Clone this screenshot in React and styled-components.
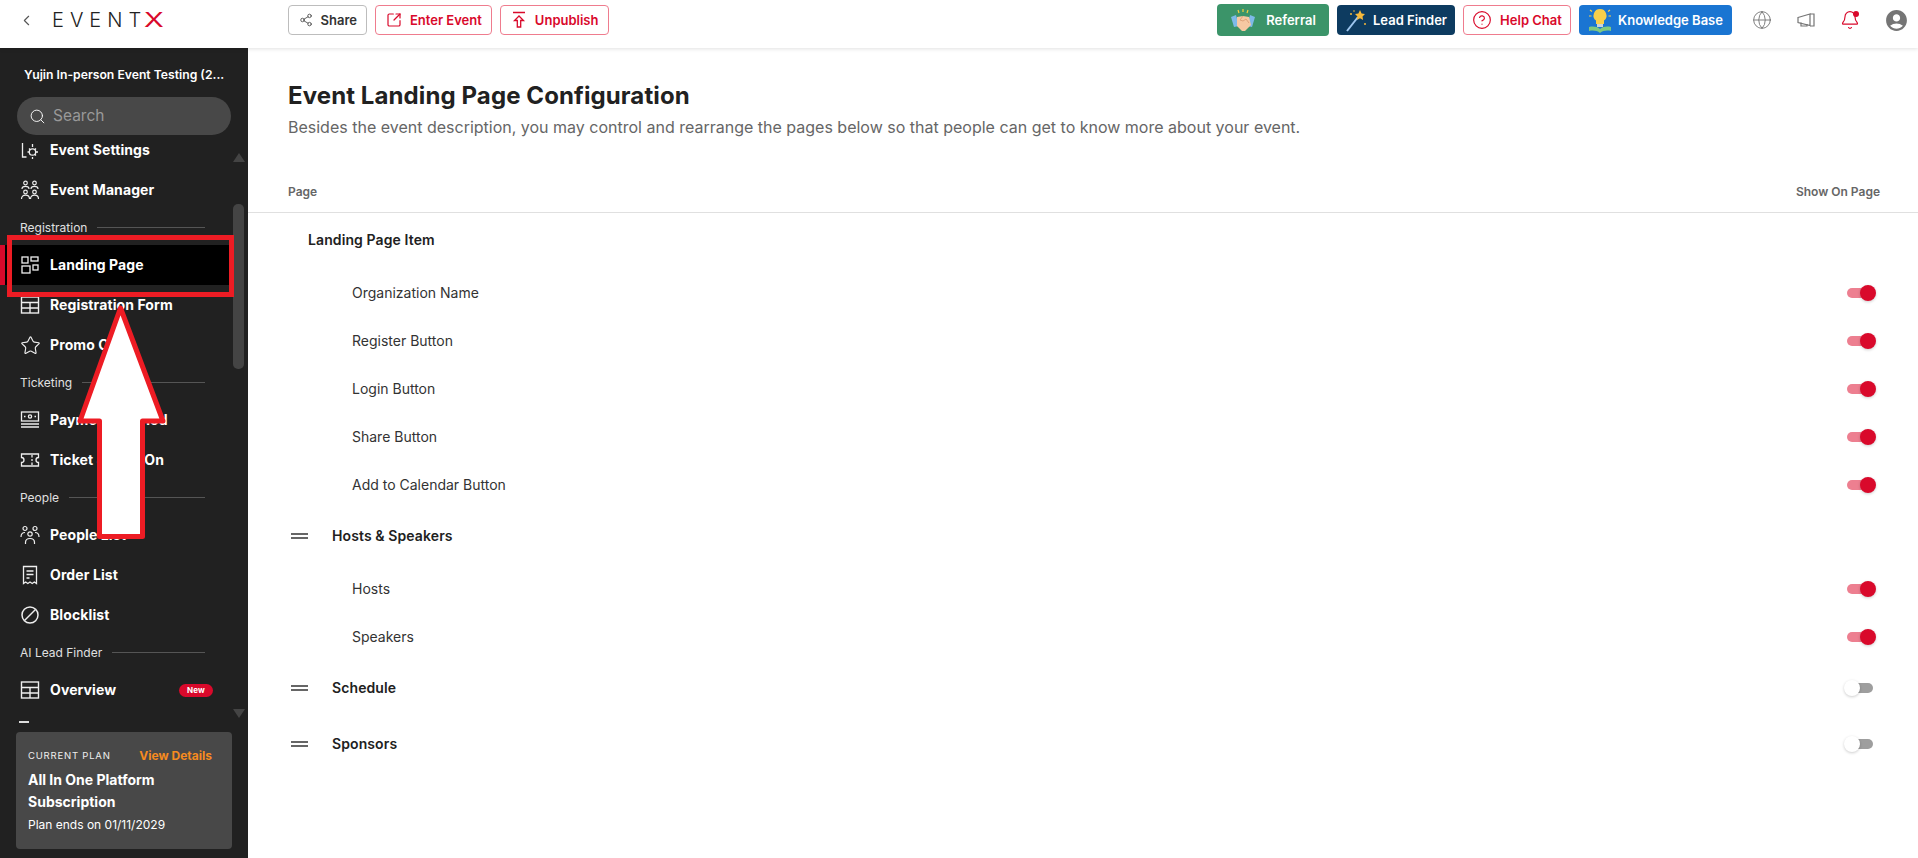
import { Bell, ChevronLeft, CircleHelp, Globe, Search, Share2, SquareArrowOutUpRight, Star } from 'lucide-react'
import { MdAccountCircle } from 'react-icons/md'
import styled, { createGlobalStyle } from 'styled-components'

const FONT = `Inter, "Noto Sans", "Liberation Sans", sans-serif`

const GlobalStyle = createGlobalStyle`
	* { box-sizing: border-box; }
	html, body { margin: 0; height: 100%; overflow: hidden; background: #fff; }
	body { font-family: ${FONT}; color: #212121; }
`

const SettingsIcon = () => (
	<svg width="20" height="20" viewBox="0 0 20 20" fill="none" stroke="currentColor" strokeWidth="1.3">
		<path d="M2.5 3v14h4" />
		<circle cx="12.5" cy="12" r="3.2" />
		<path d="M12.5 4v3M12.5 17v2M7.5 12h2M15.7 12h2.3M9 8.5l1.2 1.2M16 15.5l-1.2-1.2M16 8.5l-1.2 1.2" />
	</svg>
)

const ManagerIcon = () => (
	<svg width="20" height="20" viewBox="0 0 20 20" fill="none" stroke="currentColor" strokeWidth="1.2">
		<circle cx="5.5" cy="3" r="1.8" />
		<circle cx="14.5" cy="3" r="1.8" />
		<path d="M2 9c0-2 1.5-2.6 3.5-2.6S9 7 9 9M11 9c0-2 1.5-2.6 3.5-2.6S18 7 18 9" />
		<circle cx="5.5" cy="12" r="1.8" />
		<circle cx="14.5" cy="12" r="1.8" />
		<path d="M1.5 19c0-2.600 1.500-3.800 4-3.800s4 1.200 4 3.800M10.500 19c0-2.600 1.500-3.800 4-3.800s4 1.200 4 3.800" />
	</svg>
)

const LandingIcon = () => (
	<svg width="20" height="20" viewBox="0 0 20 20" fill="none" stroke="currentColor" strokeWidth="1.3">
		<rect x="2" y="2" width="6" height="6" />
		<rect x="11" y="2" width="7" height="4" />
		<rect x="2" y="11" width="8" height="7" />
		<rect x="13" y="10" width="5" height="5" />
	</svg>
)

const TableIcon = () => (
	<svg width="20" height="20" viewBox="0 0 20 20" fill="none" stroke="currentColor" strokeWidth="1.4">
		<rect x="1.500" y="2" width="17" height="16" />
		<path d="M1.500 7.500h17M1.500 13h17M10 7.500V18" />
	</svg>
)

const PaymentIcon = () => (
	<svg width="20" height="20" viewBox="0 0 20 20" fill="none" stroke="currentColor" strokeWidth="1.300">
		<rect x="1.500" y="2" width="17" height="9" />
		<circle cx="10" cy="6.500" r="1.600" />
		<path d="M4 6.500h1.500M14.500 6.500H16M1 14h18M1 17h18" />
	</svg>
)

const TicketIcon = () => (
	<svg width="20" height="20" viewBox="0 0 20 20" fill="none" stroke="currentColor" strokeWidth="1.300">
		<path d="M1.500 4h17v3.500a2.500 2.500 0 0 0 0 5V16h-17v-3.500a2.500 2.500 0 0 0 0-5z" />
		<path d="M12 5v2.500M12 9v2M12 12.500V15" />
	</svg>
)

const PeopleIcon = () => (
	<svg width="20" height="20" viewBox="0 0 20 20" fill="none" stroke="currentColor" strokeWidth="1.200">
		<circle cx="5" cy="3.500" r="2" />
		<circle cx="15" cy="3.500" r="2" />
		<circle cx="10" cy="9" r="2.200" />
		<path d="M1 12c0-3 1.500-4.500 4-4.500M19 12c0-3-1.500-4.500-4-4.500M5.500 19v-1.500c0-2.500 2-4 4.500-4s4.500 1.500 4.500 4V19" />
	</svg>
)

const ReceiptIcon = () => (
	<svg width="20" height="20" viewBox="0 0 20 20" fill="none" stroke="currentColor" strokeWidth="1.300">
		<path d="M3.500 1.500h13v17l-2.200-1.500-2.100 1.500-2.200-1.500-2.200 1.500-2.100-1.500-2.200 1.500z" />
		<path d="M6.500 6h7M6.500 9.500h7M6.500 13h3" />
	</svg>
)

const BlockIcon = () => (
	<svg width="20" height="20" viewBox="0 0 20 20" fill="none" stroke="currentColor" strokeWidth="1.500">
		<circle cx="10" cy="10" r="8" />
		<path d="M4.500 15.500l11-11" />
	</svg>
)

const HandshakeIcon = () => (
	<svg width="26" height="26" viewBox="0 0 26 26">
		<path d="M1 10l5-2 3 11-5 1z" fill="#7db9e8" />
		<path d="M25 10l-5-2-3 11 5 1z" fill="#7db9e8" />
		<path d="M7 10l6-1 6 1 2 8-6 6h-3l-5-5z" fill="#f7c8a2" />
		<path d="M13 9l-3 4 3 1 3-2 3 4" fill="none" stroke="#e0a27a" strokeWidth="1" />
		<path d="M13 2v3M8 3l1 3M18 3l-1 3" stroke="#f4d03f" strokeWidth="1.200" />
	</svg>
)

const WandIcon = () => (
	<svg width="22" height="24" viewBox="0 0 22 24">
		<path d="M2 23L13 9" stroke="#9ec6ee" strokeWidth="2" />
		<path d="M15 2l1.600 3.400 3.400.6-2.500 2.500.6 3.500-3.100-1.700-3.100 1.700.6-3.500L10 6l3.400-.6z" fill="#f6b93b" />
		<circle cx="6" cy="6" r="1" fill="#f6b93b" />
		<circle cx="20" cy="16" r="1" fill="#f6b93b" />
		<circle cx="9" cy="3" r=".8" fill="#f6b93b" />
	</svg>
)

const BulbBookIcon = () => (
	<svg width="24" height="28" viewBox="0 0 24 28">
		<path d="M12 3a6.500 6.500 0 0 0-4 11.600V18h8v-3.400A6.500 6.500 0 0 0 12 3z" fill="#f8cf4a" />
		<rect x="9" y="18" width="6" height="3" fill="#c9d3dc" />
		<path d="M1 21c4-1 8-.5 11 2 3-2.500 7-3 11-2v4c-4-1-8-.5-11 2-3-2.500-7-3-11-2z" fill="#7fc97f" />
		<path d="M2 4l2 1.500M22 4l-2 1.500M1 10h2.500M23 10h-2.500" stroke="#f8cf4a" strokeWidth="1.200" />
	</svg>
)

const UnpublishIcon = () => (
	<svg width="16" height="18" viewBox="0 0 16 18" fill="none" stroke="currentColor" strokeWidth="1.300">
		<path d="M2 1.500h12M8 5L3.500 9.500h2.800V16h3.400V9.500h2.800z" />
	</svg>
)

const HornIcon = () => (
	<svg width="20" height="20" viewBox="0 0 20 20" fill="none" stroke="currentColor" strokeWidth="1.200">
		<path d="M2 7.500l12-3.500v11.500l-12-3z" />
		<path d="M14 4h4v12h-4M5 12.500V16h6v-2" />
	</svg>
)

const navGroups = [
	{
		items: [
			{ label: 'Event Settings', icon: <SettingsIcon /> },
			{ label: 'Event Manager', icon: <ManagerIcon /> },
		],
	},
	{
		title: 'Registration',
		items: [
			{ label: 'Landing Page', icon: <LandingIcon />, active: true },
			{ label: 'Registration Form', icon: <TableIcon /> },
			{ label: 'Promo Code', icon: <Star size={21} strokeWidth={1.3} /> },
		],
	},
	{
		title: 'Ticketing',
		items: [
			{ label: 'Payment Method', icon: <PaymentIcon /> },
			{ label: 'Ticket & Add-On', icon: <TicketIcon /> },
		],
	},
	{
		title: 'People',
		items: [
			{ label: 'People List', icon: <PeopleIcon /> },
			{ label: 'Order List', icon: <ReceiptIcon /> },
			{ label: 'Blocklist', icon: <BlockIcon /> },
		],
	},
	{
		title: 'AI Lead Finder',
		items: [{ label: 'Overview', icon: <TableIcon />, badge: 'New' }],
	},
]

const sections = [
	{
		title: 'Landing Page Item',
		fixed: true,
		rows: [
			{ label: 'Organization Name', on: true },
			{ label: 'Register Button', on: true },
			{ label: 'Login Button', on: true },
			{ label: 'Share Button', on: true },
			{ label: 'Add to Calendar Button', on: true },
		],
	},
	{
		title: 'Hosts & Speakers',
		rows: [
			{ label: 'Hosts', on: true },
			{ label: 'Speakers', on: true },
		],
	},
	{ title: 'Schedule', on: false, rows: [] },
	{ title: 'Sponsors', on: false, rows: [] },
]

function Switch({ on }) {
	return (
		<Track $on={on}>
			<Knob $on={on} />
		</Track>
	)
}

function App() {
	return (
		<Page>
			<GlobalStyle />
			<TopBar>
				<LeftTools>
					<BackButton>
						<ChevronLeft size={17} strokeWidth={1.6} />
					</BackButton>
					<Logo>
						<LogoWord>EVENT</LogoWord>
						<LogoX>X</LogoX>
					</Logo>
					<ActionRow>
						<OutlineButton>
							<Share2 size={14} strokeWidth={1.3} />
							Share
						</OutlineButton>
						<OutlineButton $red>
							<SquareArrowOutUpRight size={16} strokeWidth={1.8} />
							Enter Event
						</OutlineButton>
						<OutlineButton $red>
							<UnpublishIcon />
							Unpublish
						</OutlineButton>
					</ActionRow>
				</LeftTools>
				<RightTools>
					<FillButton $bg="#3b9469" $w={112} $h={32} $gap={10}>
						<HandshakeIcon />
						Referral
					</FillButton>
					<FillButton $bg="#0d3b60" $w={118} $h={30} $gap={6}>
						<WandIcon />
						Lead Finder
					</FillButton>
					<OutlineButton $red $w={108}>
						<CircleHelp size={20} strokeWidth={1.4} />
						Help Chat
					</OutlineButton>
					<FillButton $bg="#1a75d2" $w={153} $h={30} $gap={6}>
						<BulbBookIcon />
						Knowledge Base
					</FillButton>
					<IconRow>
						<GreyIcon>
							<Globe size={20} strokeWidth={1.1} />
						</GreyIcon>
						<GreyIcon>
							<HornIcon />
						</GreyIcon>
						<BellIcon>
							<Bell size={20} strokeWidth={1.4} />
							<BellDot />
						</BellIcon>
						<GreyIcon>
							<MdAccountCircle size={25} />
						</GreyIcon>
					</IconRow>
				</RightTools>
			</TopBar>
			<Body>
				<Sidebar>
					<EventName>Yujin In-person Event Testing (2...</EventName>
					<SearchBox>
						<Search size={17} strokeWidth={1.3} color="#fff" />
						<SearchText>Search</SearchText>
					</SearchBox>
					<NavScroll>
						<NavList>
							{navGroups.map((group, i) => (
								<div key={i}>
									{group.title && (
										<GroupTitle>
											<span>{group.title}</span>
											<GroupRule />
										</GroupTitle>
									)}
									{group.items.map((item) => (
										<NavItem key={item.label} $active={item.active}>
											<NavIcon>{item.icon}</NavIcon>
											<NavLabel>{item.label}</NavLabel>
											{item.badge && <Badge>{item.badge}</Badge>}
										</NavItem>
									))}
								</div>
							))}
							<NextIconPeek />
						</NavList>
						<ScrollArrow $dir="up" />
						<ScrollThumb />
						<ScrollArrow $dir="down" />
					</NavScroll>
					<PlanCard>
						<PlanTop>
							<PlanLabel>CURRENT PLAN</PlanLabel>
							<PlanLink>View Details</PlanLink>
						</PlanTop>
						<PlanName>All In One Platform Subscription</PlanName>
						<PlanEnd>Plan ends on 01/11/2029</PlanEnd>
					</PlanCard>
				</Sidebar>
				<Main>
					<Intro>
						<Title>Event Landing Page Configuration</Title>
						<Subtitle>
							Besides the event description, you may control and rearrange the pages below so that people can get to know more about your event.
						</Subtitle>
					</Intro>
					<TableHead>
						<span>Page</span>
						<span>Show On Page</span>
					</TableHead>
					{sections.map((section) => (
						<section key={section.title}>
							<SectionRow $fixed={section.fixed}>
								{!section.fixed && <DragHandle />}
								<SectionTitle>{section.title}</SectionTitle>
								{section.on !== undefined && <Switch on={section.on} />}
							</SectionRow>
							{section.rows.map((row) => (
								<ItemRow key={row.label}>
									<ItemLabel>{row.label}</ItemLabel>
									<Switch on={row.on} />
								</ItemRow>
							))}
						</section>
					))}
				</Main>
			</Body>
			<Annotation width="1918" height="858" viewBox="0 0 1918 858">
				<rect x="9.500" y="237.500" width="222" height="57" fill="none" stroke="#ed1c24" strokeWidth="5" />
				<path d="M120.500 308L80 421H99.500V536.500H142.500V421H163Z" fill="#fff" stroke="#ed1c24" strokeWidth="5" strokeLinejoin="round" />
			</Annotation>
		</Page>
	)
}

const Page = styled.div`
	position: relative;
	width: 1918px;
	height: 858px;
	overflow: hidden;
	display: flex;
	flex-direction: column;
`

const TopBar = styled.header`
	height: 48px;
	flex: none;
	display: flex;
	justify-content: space-between;
	align-items: center;
	background: #fff;
	box-shadow: 0 1px 4px rgba(0, 0, 0, 0.12);
	position: relative;
	z-index: 1;
	padding: 0 9px 8px 18px;
`

const LeftTools = styled.div`
	display: flex;
	align-items: center;
`

const BackButton = styled.div`
	width: 18px;
	display: flex;
	color: #555;
`

const Logo = styled.div`
	width: 236px;
	margin-left: 16px;
	display: flex;
	align-items: center;
	font-size: 20px;
	color: #222;
`

const LogoWord = styled.span`
	width: 92px;
	font-weight: 300;
	letter-spacing: 6px;
	white-space: nowrap;
`

const LogoX = styled.span`
	color: #d9092b;
	font-weight: 400;
	transform: scaleX(1.45);
	transform-origin: left;
`

const ActionRow = styled.div`
	display: flex;
	gap: 8px;
`

const OutlineButton = styled.button`
	height: 30px;
	width: ${({ $w }) => ($w ? `${$w}px` : 'auto')};
	padding: ${({ $w }) => ($w ? '0' : '0 9.500px')};
	display: flex;
	align-items: center;
	justify-content: center;
	gap: 8px;
	background: #fff;
	border-radius: 4px;
	border: 1px solid ${({ $red }) => ($red ? '#ef7c8e' : '#bdbdbd')};
	color: ${({ $red }) => ($red ? '#d9092b' : '#333')};
	font-family: ${FONT};
	font-size: 13px;
	font-weight: 600;
	white-space: nowrap;
`

const RightTools = styled.div`
	display: flex;
	align-items: center;
	gap: 8px;
`

const FillButton = styled.button`
	width: ${({ $w }) => $w}px;
	height: ${({ $h }) => $h}px;
	display: flex;
	align-items: center;
	justify-content: center;
	gap: ${({ $gap }) => $gap}px;
	border: 0;
	padding: 0;
	border-radius: 4px;
	background: ${({ $bg }) => $bg};
	color: #fff;
	font-family: ${FONT};
	font-size: 13px;
	font-weight: 600;
	white-space: nowrap;
`

const IconRow = styled.div`
	display: flex;
	align-items: center;
	gap: 24px;
	margin-left: 12px;
`

const GreyIcon = styled.div`
	display: flex;
	color: #757575;
`

const BellIcon = styled(GreyIcon)`
	position: relative;
	color: #d9092b;
`

const BellDot = styled.span`
	position: absolute;
	top: 1px;
	right: 1px;
	width: 6px;
	height: 6px;
	border-radius: 50%;
	background: #d9092b;
`

const Body = styled.div`
	flex: 1;
	display: flex;
	min-height: 0;
`

const Sidebar = styled.aside`
	width: 248px;
	flex: none;
	background: #212121;
	color: #fff;
	display: flex;
	flex-direction: column;
	padding-top: 19px;
`

const EventName = styled.div`
	padding-left: 24px;
	font-size: 12.200px;
	font-weight: 600;
	line-height: 16px;
	white-space: nowrap;
`

const SearchBox = styled.div`
	margin: 14px 17px 0;
	height: 38px;
	flex: none;
	display: flex;
	align-items: center;
	gap: 7px;
	padding-left: 12px;
	border-radius: 19px;
	background: #484848;
`

const SearchText = styled.span`
	margin-bottom: 2px;
	font-size: 15.500px;
	color: #999;
`

const NavScroll = styled.div`
	position: relative;
	flex: 1;
	overflow: hidden;
	min-height: 0;
`

const NavList = styled.nav`
	margin-top: -5px;
`

const GroupTitle = styled.div`
	height: 35px;
	padding: 0 43px 0 20px;
	display: flex;
	align-items: center;
	gap: 10px;
	font-size: 12px;
	color: #e0e0e0;
`

const GroupRule = styled.span`
	flex: 1;
	height: 1px;
	background: #555;
`

const NavItem = styled.div`
	height: 40px;
	display: flex;
	align-items: center;
	padding: 0 59px 0 ${({ $active }) => ($active ? '15px' : '20px')};
	font-size: 14px;
	font-weight: 700;
	letter-spacing: 0.1px;
	background: ${({ $active }) => ($active ? '#000' : 'transparent')};
	margin-right: ${({ $active }) => ($active ? '16px' : '0')};
	border-left: ${({ $active }) => ($active ? '5px solid #d9092b' : '0')};
`

const NavLabel = styled.span`
	margin-bottom: 2px;
`

const NavIcon = styled.span`
	width: 30px;
	flex: none;
	display: flex;
	color: #eee;
`

const Badge = styled.span`
	margin-left: auto;
	margin-right: -24px;
	width: 34px;
	height: 13px;
	border-radius: 7px;
	background: #d9092b;
	font-size: 8px;
	line-height: 13px;
	text-align: center;
`

const NextIconPeek = styled.div`
	width: 10px;
	height: 2px;
	margin: 11px 0 0 19px;
	background: #ddd;
`

const ScrollThumb = styled.div`
	position: absolute;
	right: 4px;
	top: 69px;
	width: 11px;
	height: 165px;
	border-radius: 5px;
	background: #444;
`

const ScrollArrow = styled.div`
	position: absolute;
	right: 3px;
	width: 0;
	height: 0;
	border-left: 6px solid transparent;
	border-right: 6px solid transparent;
	${({ $dir }) =>
		$dir === 'up' ? 'top: 18px; border-bottom: 9px solid #444;' : 'bottom: 9px; border-top: 9px solid #444;'}
`

const PlanCard = styled.div`
	margin: 5px 16px 9px;
	height: 117px;
	flex: none;
	padding: 17px 20px 0 12px;
	border-radius: 4px;
	background: #484848;
`

const PlanTop = styled.div`
	display: flex;
	justify-content: space-between;
	align-items: center;
	line-height: 14px;
`

const PlanLabel = styled.span`
	font-size: 9.500px;
	letter-spacing: 0.8px;
	color: #eee;
`

const PlanLink = styled.span`
	font-size: 12px;
	font-weight: 700;
	color: #f68b1f;
`

const PlanName = styled.div`
	margin-top: 6px;
	margin-right: -8px;
	font-size: 14px;
	font-weight: 700;
	line-height: 22px;
`

const PlanEnd = styled.div`
	margin-top: 4px;
	font-size: 12px;
	line-height: 16px;
`

const Main = styled.main`
	flex: 1;
	min-width: 0;
	background: #fff;
`

const Intro = styled.div`
	padding: 33px 40px 0;
	height: 125px;
`

const Title = styled.h1`
	margin: 0;
	font-size: 24px;
	line-height: 30px;
	font-weight: 700;
	letter-spacing: 0.1px;
	color: #212121;
`

const Subtitle = styled.p`
	margin: 5px 0 0;
	font-size: 16px;
	line-height: 22px;
	color: #666;
`

const TableHead = styled.div`
	height: 40px;
	padding: 0 38px 3px 40px;
	display: flex;
	justify-content: space-between;
	align-items: center;
	border-bottom: 1px solid #e0e0e0;
	font-size: 12px;
	font-weight: 600;
	color: #666;
`

const SectionRow = styled.div`
	height: 54px;
	margin-bottom: 2px;
	display: flex;
	align-items: center;
	padding: 0 45px 0 ${({ $fixed }) => ($fixed ? '60px' : '43px')};
`

const SectionTitle = styled.span`
	flex: 1;
	margin-bottom: 2px;
	font-size: 14px;
	font-weight: 600;
	letter-spacing: 0.1px;
	color: #212121;
`

const DragHandle = styled.span`
	width: 17px;
	height: 6px;
	margin-right: 24px;
	border-top: 2px solid #666;
	border-bottom: 2px solid #666;
`

const ItemRow = styled.div`
	height: 48px;
	display: flex;
	align-items: center;
	justify-content: space-between;
	padding: 0 45px 0 104px;
`

const ItemLabel = styled.span`
	margin-bottom: 2px;
	font-size: 14px;
	color: #333;
`

const Track = styled.span`
	position: relative;
	display: block;
	width: 26px;
	height: 10px;
	border-radius: 5px;
	background: ${({ $on }) => ($on ? '#ed7f90' : '#9e9e9e')};
`

const Knob = styled.span`
	position: absolute;
	top: -3px;
	left: ${({ $on }) => ($on ? '13px' : '-3px')};
	width: 16px;
	height: 16px;
	border-radius: 50%;
	background: ${({ $on }) => ($on ? '#d9092b' : '#fff')};
	box-shadow: 0 1px 3px rgba(0, 0, 0, 0.2);
`

const Annotation = styled.svg`
	position: absolute;
	top: 0;
	left: 0;
	z-index: 2;
	pointer-events: none;
`

export default App
